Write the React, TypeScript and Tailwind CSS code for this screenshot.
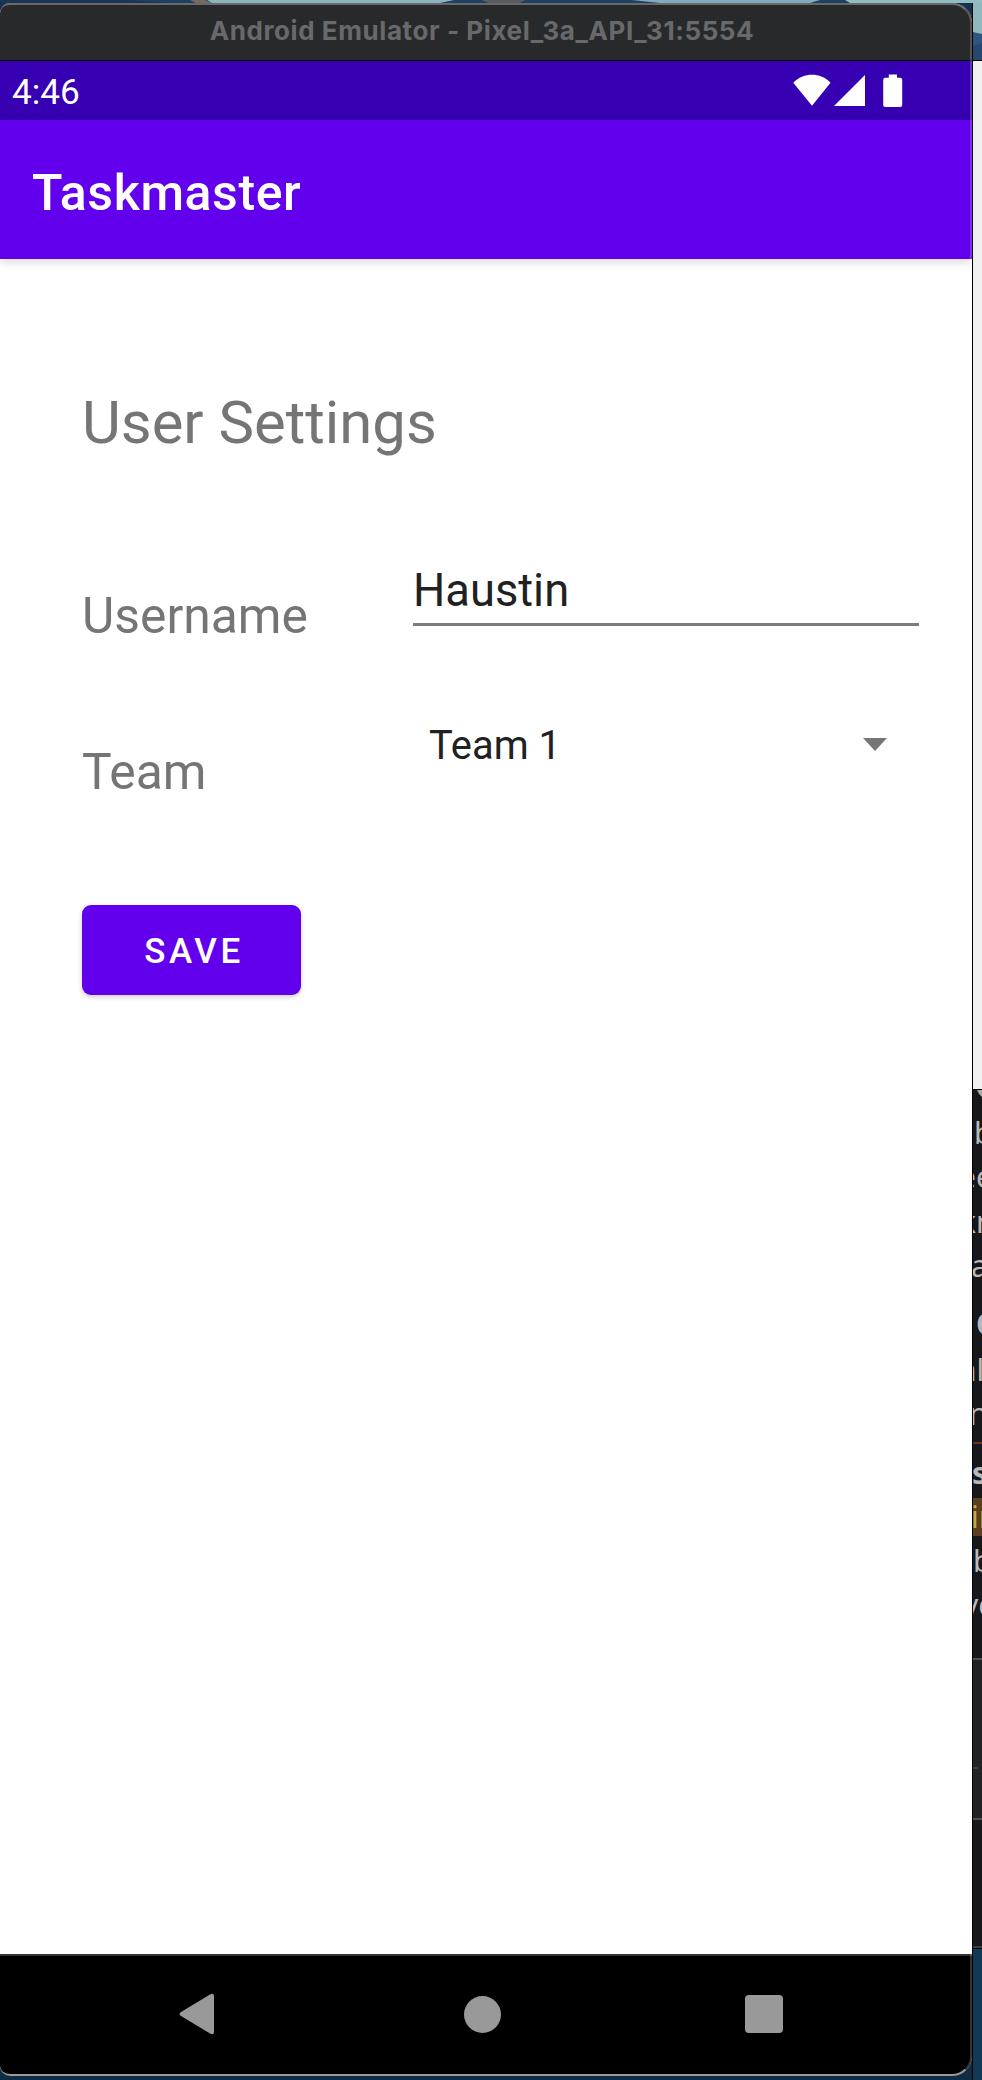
import React from "react";

type Fragment = { text: string; className: string };

const snippets: Fragment[] = [
  { text: "b", className: "h-[44px] pl-px" },
  { text: "ee", className: "h-[45px] -ml-[14px]" },
  { text: "kn", className: "h-[44px] -ml-[13px]" },
  { text: "a", className: "h-[58px] -ml-[2px]" },
  { text: "C", className: "h-[46px] pl-[3px] font-bold" },
  { text: "nl", className: "h-[44px] -ml-[15px]" },
  { text: "n", className: "h-[50px] -ml-[4px]" },
];

function StatusIcons() {
  return (
    <svg width="112" height="34" viewBox="792 73 112 34" fill="white">
      <path d="M793.3 81.8C803.5 71.2 820.5 71.2 830.5 81.8L812 104.8Z" />
      <path d="M834 105L865 74V105Z" />
      <path d="M888.8 73.5h8.2v3.3h3.2q2 0 2 2v25.2q0 2-2 2h-15q-2 0-2-2V78.800q0-2 2-2h3.600Z" />
    </svg>
  );
}

function Sidebar() {
  return (
    <aside className="flex w-[10px] shrink-0 flex-col overflow-hidden border-l border-black bg-[#16181b] font-['Noto_Sans',sans-serif] text-[30px] leading-[44px] text-[#b9b9b9]">
      <svg width="9" height="57" viewBox="0 0 9 57" className="shrink-0">
        <rect width="9" height="57" fill="#8fb8bf" />
        <path d="M0 29L4 30L9 31V57H0Z" fill="#2c5580" />
        <path d="M0 43L9 40V57H0Z" fill="#24486f" />
      </svg>
      <div className="h-[1030px] shrink-0 border-y border-black bg-[#f0f0f0]" />
      <div className="h-[21px] shrink-0">
        <svg width="9" height="9" viewBox="0 0 9 9">
          <path d="M4 0H9V7Q6 5 4 0Z" fill="#aaa" />
        </svg>
      </div>
      {snippets.map((item, index) => (
        <div key={index} className={`shrink-0 whitespace-nowrap ${item.className}`}>
          {item.text}
        </div>
      ))}
      <div className="h-[9px] shrink-0 border-t-2 border-[#6d3323]" />
      <div className="-ml-px h-[47px] shrink-0 font-bold">s</div>
      <div className="h-[38px] shrink-0 overflow-hidden whitespace-nowrap bg-[#5a3f20] text-[#c9a840]">
        <div className="-mt-[3px] -ml-[2px]">in</div>
      </div>
      <div className="mt-[3px] h-[44px] shrink-0">b</div>
      <div className="-ml-[10px] h-[75px] shrink-0 whitespace-nowrap">ye</div>
      <div className="flex h-[160px] shrink-0 items-center border-t-2 border-[#505152] bg-[#202226]">
        <span className="mt-[58px] h-[2px] w-[5px] bg-[#3c3e42]" />
      </div>
      <div className="h-[130px] shrink-0 border-t-2 border-b-2 border-t-[#505152] border-b-[#3e4042]" />
      <div className="flex-1 border-t border-black bg-[#123a56]" />
    </aside>
  );
}

function Wallpaper() {
  return (
    <svg width="982" height="3" viewBox="0 0 982 3" className="shrink-0">
      <rect width="982" height="3" fill="#203f63" />
      <path d="M0 0H130L165 3H0Z" fill="#1c3554" />
      <path d="M190 0H205L212 3H196Z" fill="#756b62" />
      <path d="M207 0H454L440 3H212Z" fill="#8ab4bd" />
      <path d="M482 0H525L520 3H488Z" fill="#5c5b60" />
      <path d="M632 0H820L810 3H660Z" fill="#83acb9" />
      <path d="M845 0H982V3H850Z" fill="#91bcc2" />
    </svg>
  );
}

export default function App() {
  return (
    <div className="flex h-[2080px] w-[982px] flex-col overflow-hidden bg-[#0d2d44] font-[Roboto,sans-serif]">
      <Wallpaper />
      <div className="flex flex-1">
        <div className="w-[972px] shrink-0 bg-[linear-gradient(to_bottom,#17304e_0,#17304e_10px,#0d2d44_60px)]">
          <div className="relative flex h-[2073px] flex-col overflow-hidden rounded-l-[10px] rounded-r-[20px] bg-white">
            <header className="flex h-[58px] shrink-0 justify-center border-b border-black bg-[#28292b] pr-[8px]">
              <h1 className="pt-[12px] font-[Inter,sans-serif] text-[26px] leading-[32px] font-bold tracking-[0.580px] whitespace-nowrap text-[#69696b]">
                Android Emulator - Pixel_3a_API_31:5554
              </h1>
            </header>
            <div className="flex h-[59px] shrink-0 items-center justify-between bg-[#3700b3] pr-[68px] pl-[12px] text-[35.200px] text-white">
              <span className="pt-[2px] leading-[40px]">4:46</span>
              <StatusIcons />
            </div>
            <div className="relative flex h-[139px] shrink-0 items-center bg-[#6200ee] pt-[7px] pl-[32px] shadow-[0_2px_10px_rgba(0,0,0,0.18)]">
              <h2 className="text-[50px] leading-[58px] font-medium tracking-[0.600px] text-white">Taskmaster</h2>
            </div>
            <main className="flex flex-1 flex-col bg-white pt-[128px] pl-[82px] text-[#757575]">
              <h3 className="h-[178px] pt-px text-[59.800px] leading-[70px]">User Settings</h3>
              <div className="flex h-[157px]">
                <label className="w-[331px] shrink-0 pt-[22px] text-[49.800px] leading-[58px]">Username</label>
                <div className="h-[61px] w-[506px] shrink-0 border-b-[3px] border-[#7c7c7c] text-[45.300px] leading-[52px] text-[#212121]">
                  Haustin
                </div>
              </div>
              <div className="flex h-[183px]">
                <label className="w-[347px] shrink-0 pt-[21px] text-[49.800px] leading-[58px]">Team</label>
                <div className="flex h-[46px] w-[458px] shrink-0 items-center justify-between text-[39.900px] leading-[46px] text-[#212121]">
                  <span className="pt-px">Team 1</span>
                  <svg width="24" height="13" viewBox="0 0 24 13" className="-mt-px">
                    <path d="M0 0H24L12 13Z" fill="#757575" />
                  </svg>
                </div>
              </div>
              <button className="h-[90px] w-[219px] rounded-[9px] bg-[#6200ee] pt-[3px] pl-[5px] text-[35px] leading-[40px] font-medium tracking-[3.500px] text-white shadow-[0_2px_5px_rgba(0,0,0,0.2)]">
                SAVE
              </button>
            </main>
            <nav className="flex h-[122px] shrink-0 items-center border-t-2 border-[#333] bg-black pb-[4px] pl-[179px]">
              <svg width="36" height="42" viewBox="0 0 36 42" className="mr-[249px]">
                <path d="M2 19L31 1.500Q35 -.5 35 3V39Q35 42.500 31 40.500L2 23Q-1 21 2 19Z" fill="#999" />
              </svg>
              <div className="mr-[244px] size-[37px] rounded-full bg-[#999]" />
              <div className="size-[38px] rounded-[4px] bg-[#999]" />
            </nav>
            <div className="pointer-events-none absolute inset-0 rounded-l-[10px] rounded-r-[20px] border-t-2 border-r-2 border-b-2 border-t-white/30 border-r-white/20 border-b-white/60" />
          </div>
        </div>
        <Sidebar />
      </div>
    </div>
  );
}
